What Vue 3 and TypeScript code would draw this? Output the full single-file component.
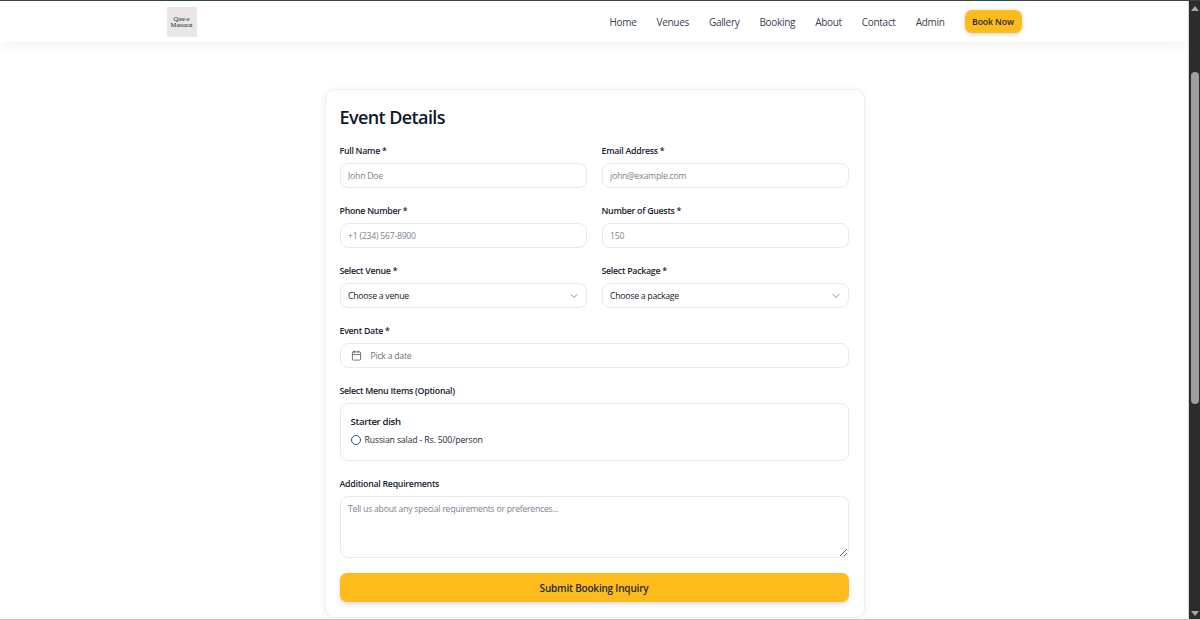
<template>
  <div class="window">
    <div class="page">
      <header class="topbar">
        <div class="topbar-inner">
          <div class="logo"><span>Qasr-e<br />Massarat</span></div>
          <nav class="nav">
            <a v-for="item in navItems" :key="item" class="nav-link">{{ item }}</a>
            <button class="book-now" type="button">Book Now</button>
          </nav>
        </div>
      </header>

      <main class="content">
        <form class="card" @submit.prevent>
          <h1>Event Details</h1>

          <div class="grid">
            <div class="field">
              <label>Full Name *</label>
              <input type="text" placeholder="John Doe" />
            </div>
            <div class="field">
              <label>Email Address *</label>
              <input type="email" placeholder="john@example.com" />
            </div>
            <div class="field">
              <label>Phone Number *</label>
              <input type="tel" placeholder="+1 (234) 567-8900" />
            </div>
            <div class="field">
              <label>Number of Guests *</label>
              <input type="text" placeholder="150" />
            </div>
            <div v-for="sel in selects" :key="sel.label" class="field">
              <label>{{ sel.label }}</label>
              <button class="select" type="button">
                <span>{{ sel.text }}</span>
                <svg width="12" height="12" viewBox="0 0 24 24" fill="none" stroke="#8a8f98" stroke-width="2" stroke-linecap="round" stroke-linejoin="round"><path d="m6 9 6 6 6-6" /></svg>
              </button>
            </div>
            <div class="field wide">
              <label>Event Date *</label>
              <button class="select date" type="button">
                <svg width="11" height="11" viewBox="0 0 24 24" fill="none" stroke="#5f6670" stroke-width="2" stroke-linecap="round" stroke-linejoin="round"><path d="M8 2v4" /><path d="M16 2v4" /><rect x="3" y="4" width="18" height="18" rx="2" /><path d="M3 10h18" /></svg>
                <span>Pick a date</span>
              </button>
            </div>
            <div class="field wide">
              <label>Select Menu Items (Optional)</label>
              <div class="menu-box">
                <h3>Starter dish</h3>
                <div class="menu-item">
                  <span class="radio"></span>
                  <span>Russian salad - Rs. 500/person</span>
                </div>
              </div>
            </div>
            <div class="field wide">
              <label>Additional Requirements</label>
              <textarea placeholder="Tell us about any special requirements or preferences..."></textarea>
            </div>
          </div>

          <button class="submit" type="submit">Submit Booking Inquiry</button>
        </form>
      </main>
    </div>

    <div class="scrollbar">
      <span class="arrow up"></span>
      <span class="thumb"></span>
      <span class="arrow down"></span>
    </div>
  </div>
</template>

<script setup lang="ts">
const navItems: string[] = ['Home', 'Venues', 'Gallery', 'Booking', 'About', 'Contact', 'Admin'];

const selects = [
  { label: 'Select Venue *', text: 'Choose a venue' },
  { label: 'Select Package *', text: 'Choose a package' },
];
</script>

<style scoped>
.window {
  height: 620px;
  display: flex;
  overflow: hidden;
  font-family: "Open Sans", "Noto Sans", sans-serif;
  color: #0f172a;
  background: #fff;
  border-top: 1px solid #2f4a35;
  border-bottom: 1px solid #c9c9c9;
  box-sizing: border-box;
}

.page {
  flex: 1;
  min-width: 0;
}

.topbar {
  height: 41px;
  background: #fff;
  box-shadow: 0 3px 12px rgba(0, 0, 0, 0.06);
}

.topbar-inner {
  width: 855px;
  height: 100%;
  margin: 0 auto;
  display: flex;
  justify-content: space-between;
  align-items: center;
}

.logo {
  width: 30px;
  height: 30px;
  background: #e8e7e5;
  display: flex;
  align-items: center;
  justify-content: center;
  text-align: center;
  font-family: "Liberation Serif", serif;
  font-size: 6.5px;
  line-height: 6px;
  letter-spacing: -0.2px;
  color: #2b2b2b;
}

.nav {
  display: flex;
  align-items: center;
  gap: 20px;
}

.nav-link {
  font-size: 10px;
  letter-spacing: -0.3px;
  color: #374151;
}

.book-now {
  width: 57px;
  height: 23px;
  padding: 0;
  border: none;
  border-radius: 7px;
  background: #fdbc1c;
  box-shadow: 0 1px 4px rgba(0, 0, 0, 0.2);
  font: 600 8.7px "Open Sans", sans-serif;
  letter-spacing: -0.1px;
  color: #1f2937;
}

.content {
  padding: 47px 0 0 1px;
  display: flex;
  justify-content: center;
}

.card {
  width: 540px;
  box-sizing: border-box;
  padding: 15px 15px 15px 14px;
  border: 1px solid #eceef1;
  border-radius: 10px;
  box-shadow: 0 2px 10px rgba(0, 0, 0, 0.06);
  background: #fff;
}

h1 {
  margin: 0 0 15px;
  font-size: 18px;
  line-height: 24px;
  font-weight: 600;
  letter-spacing: -0.6px;
  color: #0f172a;
}

.grid {
  display: grid;
  grid-template-columns: 1fr 1fr;
  column-gap: 15px;
  row-gap: 16px;
}

.field {
  display: flex;
  flex-direction: column;
  gap: 4px;
}

.wide {
  grid-column: 1 / -1;
}

label {
  font-size: 8.8px;
  line-height: 15px;
  font-weight: 600;
  letter-spacing: -0.27px;
  color: #1a2230;
}

input,
.select,
textarea {
  box-sizing: border-box;
  width: 100%;
  border: 1px solid #e8eaee;
  border-radius: 8px;
  background: #fff;
  font-family: "Open Sans", sans-serif;
  font-size: 8.7px;
  letter-spacing: -0.25px;
  color: #111827;
  outline: none;
}

input,
.select {
  height: 25px;
  padding: 0 7.5px;
}

::placeholder {
  color: #7b838f;
  opacity: 1;
}

.select {
  display: flex;
  align-items: center;
  justify-content: space-between;
  padding-right: 6px;
  text-align: left;
}

.date {
  justify-content: flex-start;
  gap: 9px;
  padding-left: 10px;
  color: #6b7280;
}

.menu-box {
  height: 58px;
  box-sizing: border-box;
  padding: 10px;
  border: 1px solid #e8eaee;
  border-radius: 8px;
}

h3 {
  margin: 0 0 4px;
  font-size: 9.6px;
  line-height: 15px;
  font-weight: 600;
  letter-spacing: -0.33px;
  color: #111827;
}

.menu-item {
  display: flex;
  align-items: center;
  gap: 4px;
  font-size: 8.7px;
  line-height: 14px;
  letter-spacing: -0.15px;
  color: #1f2937;
}

.radio {
  box-sizing: border-box;
  width: 10px;
  height: 10px;
  border: 1px solid #2f4f73;
  border-radius: 50%;
}

textarea {
  display: block;
  height: 62px;
  padding: 6px 7.5px;
  resize: vertical;
}

.submit {
  display: block;
  width: 100%;
  height: 29px;
  margin-top: 15px;
  border: none;
  border-radius: 7px;
  background: #fdbc1c;
  box-shadow: 0 2px 5px rgba(0, 0, 0, 0.15);
  font: 600 10px "Open Sans", sans-serif;
  letter-spacing: -0.2px;
  color: #1f2937;
}

.scrollbar {
  width: 11px;
  background: #2c2c2c;
  display: flex;
  flex-direction: column;
  align-items: center;
  border-left: 1px solid #d8d8d8;
}

.arrow {
  width: 0;
  height: 0;
  border-left: 4px solid transparent;
  border-right: 4px solid transparent;
}

.up {
  margin-top: 5px;
  border-bottom: 5px solid #a8a8a8;
}

.thumb {
  width: 8px;
  height: 332px;
  margin-top: 61px;
  border-radius: 4px;
  background: #9f9f9f;
}

.down {
  margin-top: auto;
  margin-bottom: 3px;
  border-top: 5px solid #a8a8a8;
}
</style>

<style>
html,
body {
  margin: 0;
  overflow: hidden;
}
</style>
